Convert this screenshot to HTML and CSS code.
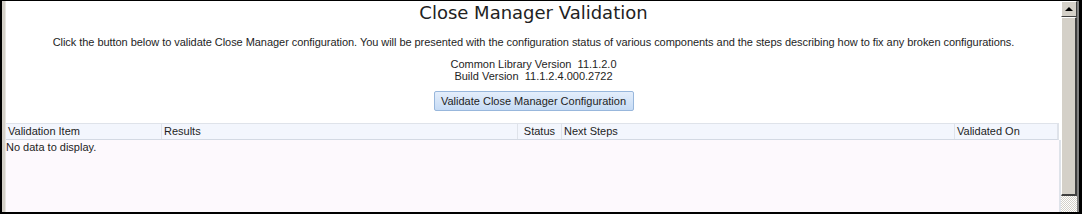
FILE: index.html
```html
<!DOCTYPE html>
<html lang="en">
<head>
    <meta charset="UTF-8">
    <title>Close Manager Validation</title>
    <link rel="stylesheet" href="styles.css">
</head>
<body>
    <div class="frame">
        <div class="edge"></div>
        <div class="page">
            <h1 class="title">Close Manager Validation</h1>
            <p class="intro">Click the button below to validate Close Manager configuration. You will be presented with the configuration status of various components and the steps describing how to fix any broken configurations.</p>
            <div class="versions">
                <div>Common Library Version&nbsp; 11.1.2.0</div>
                <div>Build Version&nbsp; 11.1.2.4.000.2722</div>
            </div>
            <div class="actions">
                <button class="btn">Validate Close Manager Configuration</button>
            </div>
            <div class="grid">
                <div class="grid_head">
                    <div class="col col_item">Validation Item</div>
                    <div class="col col_results">Results</div>
                    <div class="col col_status">Status</div>
                    <div class="col col_steps">Next Steps</div>
                    <div class="col col_date">Validated On</div>
                </div>
                <div class="grid_body">No data to display.</div>
            </div>
        </div>
        <div class="scrollbar">
            <div class="arrow_up"><span></span></div>
            <div class="thumb"></div>
            <div class="track"></div>
        </div>
        <div class="edge_right"></div>
    </div>
</body>
</html>
```

FILE: styles.css
```css
body{
    margin: 0;
    background-color: #000;
}
.frame{
    width: 1080px;
    height: 211px;
    border-top: 1px solid #000;
    border-left: 2px solid #000;
    border-bottom: 2px solid #000;
    display: flex;
    background-color: #fff;
    overflow: hidden;
}
.edge{
    width: 4px;
    background-color: #d4d0c8;
    border-right: 1px solid #e8e6e1;
    box-sizing: border-box;
}
.page{
    width: 1055px;
    display: flex;
    flex-direction: column;
    font-family: "Liberation Sans", Arial, sans-serif;
    font-size: 11px;
    color: #1e1e1e;
}
.title{
    margin: 1px 0 0 0;
    text-align: center;
    font-family: "DejaVu Sans", sans-serif;
    font-weight: normal;
    font-size: 18px;
    line-height: 22px;
    color: #222;
}
.intro{
    margin: 12px 0 0 0;
    text-align: center;
    line-height: 13px;
    letter-spacing: -0.05px;
}
.versions{
    margin-top: 9px;
    text-align: center;
    line-height: 12px;
}
.actions{
    display: flex;
    justify-content: center;
    margin-top: 9px;
}
.btn{
    width: 200px;
    height: 20px;
    padding: 0;
    font-family: "Liberation Sans", Arial, sans-serif;
    font-size: 11px;
    color: #1e1e1e;
    border: 1px solid #98b7dc;
    border-radius: 2px;
    background: linear-gradient(#e4eefb, #c6dbf5);
}
.grid{
    margin-top: 12px;
    flex: 1;
    display: flex;
    flex-direction: column;
}
.grid_head{
    display: flex;
    height: 17px;
    box-sizing: border-box;
    border-top: 1px solid #dfe3ea;
    border-bottom: 1px solid #d3d9e3;
    background-color: #f3f6fd;
    width: 1053px;
    border-right: 2px solid #dfe3ea;
}
.col{
    line-height: 15px;
    padding: 0 2px;
    box-sizing: border-box;
    white-space: nowrap;
}
.col + .col{
    border-left: 1px solid #dfe3ea;
}
.col_item{ width: 155px; }
.col_results{ width: 356px; }
.col_status{ width: 44px; text-align: right; padding-right: 6px; }
.col_steps{ width: 393px; }
.col_date{ width: 103px; }
.grid_body{
    flex: 1;
    background-color: #fdf9fd;
    line-height: 14px;
    padding-left: 0;
    border-right: 2px solid #dfe3ea;
}
.scrollbar{
    width: 16px;
    display: flex;
    flex-direction: column;
}
.arrow_up{
    height: 16px;
    box-sizing: border-box;
    background-color: #d4d0c8;
    border-top: 1px solid #fff;
    border-left: 1px solid #fff;
    border-right: 1px solid #404040;
    border-bottom: 1px solid #404040;
    display: flex;
    align-items: center;
    justify-content: center;
}
.arrow_up span{
    width: 0;
    height: 0;
    border-left: 4px solid transparent;
    border-right: 4px solid transparent;
    border-bottom: 4px solid #000;
}
.thumb{
    height: 179px;
    box-sizing: border-box;
    background-color: #d4d0c8;
    border-top: 1px solid #fff;
    border-left: 1px solid #fff;
    border-right: 2px solid #404040;
    border-bottom: 2px solid #404040;
}
.track{
    flex: 1;
    background: repeating-conic-gradient(#d4d0c8 0 25%, #fff 0 50%) 0 0/2px 2px;
}
.edge_right{
    width: 2px;
    background-color: #808080;
    border-right: 3px solid #000;
}
```
